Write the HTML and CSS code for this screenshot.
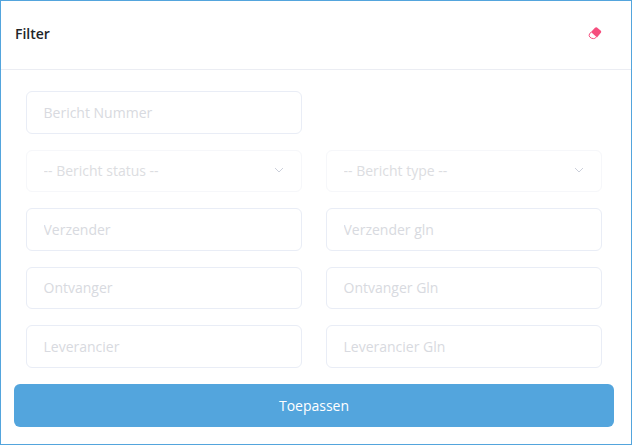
FILE: index.html
```html
<!DOCTYPE html>
<html lang="nl">

<head>
    <meta charset="UTF-8">
    <meta name="viewport" content="width=device-width, initial-scale=1.0">
    <title>Filter</title>
    <link rel="stylesheet" href="styles.css">
</head>

<body>
    <div class="card">
        <div class="card-header">
            <h3>Filter</h3>
            <button class="clear" type="button" aria-label="Wissen">
                <svg width="14" height="14" viewBox="0 0 14 14">
                    <path class="eraser-tip" d="M3 6 L7 1.8 Q8 1 9 1.6 L12.8 4.8 Q13.6 5.7 13 6.6 L9 11.6 Z"/>
                    <path class="eraser-base" d="M3.2 6 L1.5 8 Q.6 9.6 1.8 11 Q3.2 12.6 5.4 12.6 Q7 12.6 7.8 11.6 L8.6 10.8"/>
                </svg>
            </button>
        </div>

        <form class="filter-form">
            <div class="fields">
                <input class="field" type="text" placeholder="Bericht Nummer">
                <div></div>

                <div class="select-wrap">
                    <select class="field field-select">
                        <option>-- Bericht status --</option>
                    </select>
                    <svg class="chevron" width="10" height="6" viewBox="0 0 10 6">
                        <path d="M1 1 L5 5 L9 1"/>
                    </svg>
                </div>
                <div class="select-wrap">
                    <select class="field field-select">
                        <option>-- Bericht type --</option>
                    </select>
                    <svg class="chevron" width="10" height="6" viewBox="0 0 10 6">
                        <path d="M1 1 L5 5 L9 1"/>
                    </svg>
                </div>

                <input class="field" type="text" placeholder="Verzender">
                <input class="field" type="text" placeholder="Verzender gln">
                <input class="field" type="text" placeholder="Ontvanger">
                <input class="field" type="text" placeholder="Ontvanger Gln">
                <input class="field" type="text" placeholder="Leverancier">
                <input class="field" type="text" placeholder="Leverancier Gln">
            </div>

            <button class="submit" type="submit">Toepassen</button>
        </form>
    </div>
</body>

</html>
```

FILE: styles.css
```css
* {
    box-sizing: border-box;
}

html,
body {
    margin: 0;
    height: 100%;
}

body {
    font-family: "Open Sans", Arial, sans-serif;
    font-size: 14px;
    background-color: #fff;
}

.card {
    height: 445px;
    border: 1px solid #53a5dd;
    overflow: hidden;
}

.card-header {
    height: 69px;
    display: flex;
    justify-content: space-between;
    align-items: center;
    padding: 0 29px 4px 14px;
    border-bottom: 1px solid #ebedf3;
}

.card-header h3 {
    margin: 0;
    font-size: 14px;
    font-weight: 600;
    color: #212529;
}

.clear {
    display: flex;
    padding: 0;
    border: none;
    background: none;
    cursor: pointer;
}

.eraser-tip {
    fill: #f64e7e;
}

.eraser-base {
    fill: none;
    stroke: #f64e7e;
    stroke-width: 1;
}

.filter-form {
    padding: 21.45px 17px 0 13px;
}

.fields {
    display: grid;
    grid-template-columns: 276px 276px;
    grid-auto-rows: 42.6px;
    column-gap: 24px;
    row-gap: 15.8px;
    padding-left: 12px;
}

.field {
    display: block;
    width: 100%;
    height: 100%;
    padding: 0 16.5px;
    font-family: inherit;
    font-size: 14px;
    color: #3f4254;
    background-color: #fff;
    border: 1px solid #e9edf6;
    border-radius: 6px;
    outline: none;
}

.field::placeholder {
    color: #d8dae0;
    opacity: 1;
}

.select-wrap {
    position: relative;
}

.field-select {
    appearance: none;
    padding-bottom: 2px;
    color: #dcdde1;
    border-color: #f6f7fa;
}

.chevron {
    position: absolute;
    top: 17px;
    right: 18px;
}

.chevron path {
    fill: none;
    stroke: #ccd0db;
    stroke-width: 1;
}

.submit {
    display: block;
    width: 600px;
    height: 43px;
    margin-top: 16px;
    font-family: inherit;
    font-size: 14px;
    color: #fff;
    background-color: #53a5dd;
    border: none;
    border-radius: 6px;
    cursor: pointer;
}
```
